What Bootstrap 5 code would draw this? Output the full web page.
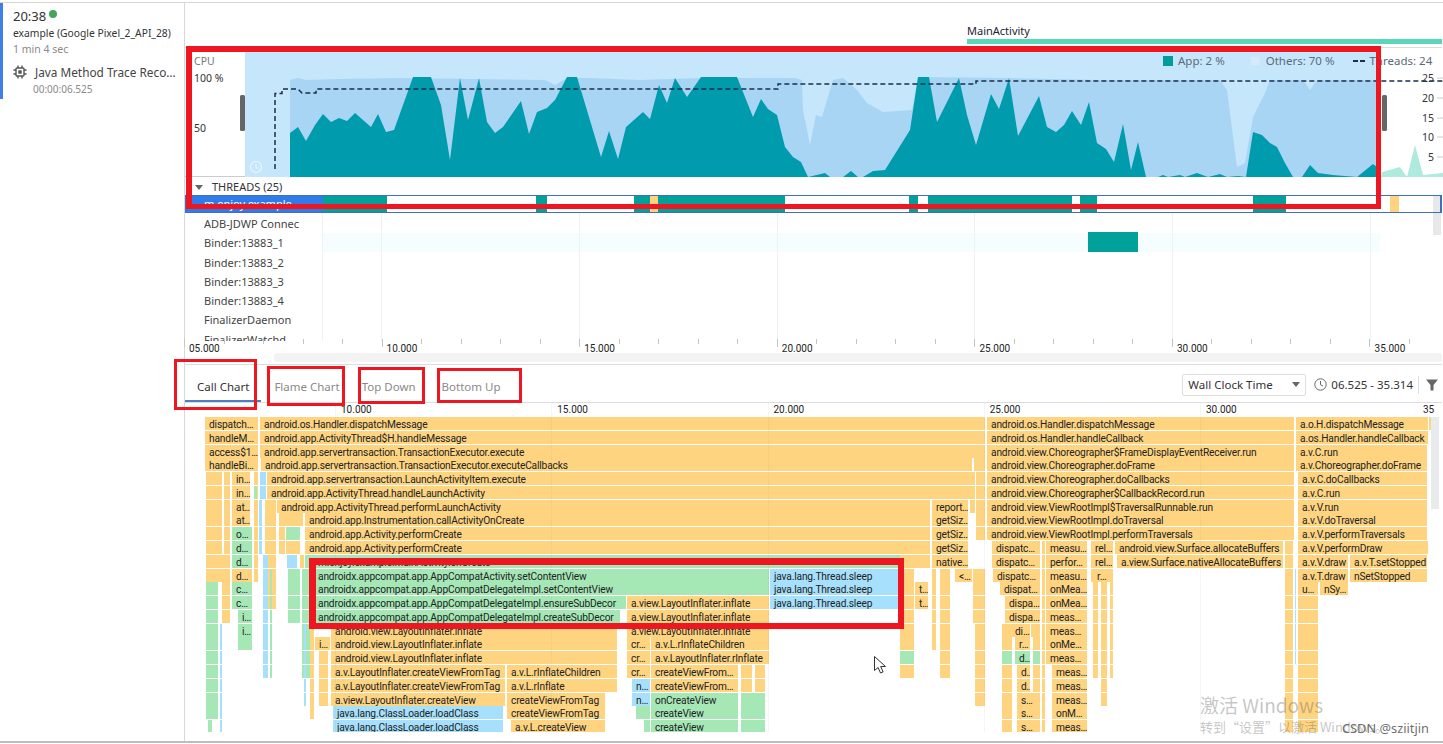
<!DOCTYPE html>
<html lang="en">
<head>
<meta charset="UTF-8">
<title>Profiler</title>
<link href="https://cdn.jsdelivr.net/npm/bootstrap@5.3.0/dist/css/bootstrap.min.css" rel="stylesheet">
<style>
html, body { margin: 0; height: 744px; overflow: hidden; background: #fff; }
body { font-family: "Noto Sans", "Noto Sans CJK SC", sans-serif; font-size: 11px; color: #333; position: relative; }
.app-root { width: 1443px; border-top: 1px solid #d6d6d6; margin-top: 2px; border-bottom: 2px solid #bdbdbd; box-sizing: content-box; height: 738px; border-right: 1px solid #ddd; }
.side-col { width: 185px; flex: none; border-right: 1px solid #d8d8d8; }
.session-box { height: 96px; border-left: 3px solid #3f7fe6; padding: 4px 0 0 10px; }
.clock-time { font-size: 13px; line-height: 18px; color: #333; }
.live-dot { width: 8px; height: 8px; border-radius: 50%; background: #45a65a; margin-left: 3px; margin-bottom: 4px; }
.device-name { font-size: 10.3px; line-height: 15px; margin-top: 1px; color: #333; white-space: nowrap; }
.muted-text { font-size: 10.5px; line-height: 15px; color: #8a8a8a; margin-top: 1px; }
.trace-title { font-size: 11.8px; line-height: 16px; margin-top: 7px; white-space: nowrap; color: #444; }
.trace-time { font-size: 10px; line-height: 14px; margin: 2px 0 0 20px; color: #8a8a8a; }
.main-col { width: 1257px; flex: none; }
.activity-band { height: 44px; padding-left: 782px; }
.activity-name { font-size: 11px; line-height: 14px; padding-top: 21px; color: #223; }
.activity-line { height: 5px; background: #5ad6b8; margin-top: 1px; }
.cpu-band { height: 130px; border-top: 1px solid #ddd; border-bottom: 1px solid #ccc; position: relative; }
.cpu-labels { width: 60px; flex: none; padding: 6px 0 0 9px; font-size: 10.5px; line-height: 14px; }
.cpu-label-head { color: #777; }
.cpu-label-top { margin-top: 3px; }
.cpu-label-mid { margin-top: 36px; }
.cpu-canvas { display: block; overflow: visible; }
.cpu-legend { position: absolute; top: 5px; left: 978px; font-size: 11.5px; line-height: 16px; color: #5b6b78; white-space: nowrap; }
.legend-swatch { width: 10px; height: 10px; margin-right: 5px; }
.swatch-app { background: #009c9c; }
.swatch-others { background: #d3ecfd; border: 1px solid #cfe6f7; }
.legend-app { margin-right: 25px; }
.legend-others { margin-right: 19px; margin-left: 1px; }
.axis-num { position: absolute; left: 1237px; font-size: 10.5px; line-height: 12px; color: #333; }
.axis-25 { top: 24px; }
.axis-20 { top: 44px; }
.axis-15 { top: 64px; }
.axis-10 { top: 83px; }
.axis-5 { top: 103px; left: 1243px; }
.threads-head { height: 18px; padding: 2px 0 0 10px; font-size: 11px; line-height: 16px; color: #333; }
.head-caret { width: 0; height: 0; border-left: 4px solid transparent; border-right: 4px solid transparent; border-top: 5px solid #666; margin-right: 9px; }
.thread-selected { height: 18px; border: 1px solid #3f6fc4; border-right-width: 2px; position: relative; }
.thread-label { width: 137px; height: 100%; background: #2f7bea; color: #fff; padding-left: 18px; line-height: 15px; }
.thread-seg { position: absolute; top: 0; bottom: 0; }
.thread-list { height: 128px; overflow: hidden; position: relative; padding-top: 1px; }
.thread-name { height: 19.3px; line-height: 19.3px; padding-left: 19px; font-size: 11px; color: #444; white-space: nowrap; width: 137px; position: relative; }
.thread-stripe { position: absolute; left: 138px; top: 20px; width: 1057px; height: 19px; background: #f6fdfe; }
.thread-block { position: absolute; left: 903px; top: 19px; width: 50px; height: 20px; background: #00a19a; }
.thread-sep { position: absolute; top: 0; bottom: 0; width: 1px; background: #eef2f4; }
.thread-sep-first { left: 137px; }
.side-thumb { position: absolute; left: 1248px; top: 0; width: 8px; height: 22px; background: #e6e8ea; }
.ruler-band { height: 13px; margin-top: -2px; position: relative; font-family: Roboto, sans-serif; font-size: 10px; color: #222; }
.ruler-tick { position: absolute; top: 0; width: 1px; height: 5px; background: #c4c4c4; }
.ruler-tick-major { height: 8px; }
.ruler-num { position: absolute; top: 3px; line-height: 14px; }
.range-track { height: 9px; margin: 1px 0 2px 89px; background: #f3f3f3; border-radius: 3px; }
.tab-band { height: 39px; border-top: 1px solid #ddd; border-bottom: 1px solid #ddd; }
.tab-btn { padding: 14px 12px 0 12px; height: 37px; font-size: 11.5px; line-height: 16px; color: #8a8a8a; white-space: nowrap; }
.tab-on { color: #333; border-bottom: 2px solid #4a7fc4; }
.tab-flame { margin-left: 1px; }
.tab-top { margin-left: -1px; padding-left: 11px; }
.tab-bottom { margin-left: 2px; }
.tab-tools { height: 37px; padding-top: 2px; }
.clock-select { width: 124px; height: 22px; border: 1px solid #ddd; border-radius: 2px; padding-left: 5px; font-size: 11.5px; line-height: 20px; color: #333; margin-right: 8px; }
.select-caret { width: 0; height: 0; border-left: 4px solid transparent; border-right: 4px solid transparent; border-top: 5px solid #666; margin-right: 5px; }
.range-text { font-size: 11.5px; color: #333; margin: 0 5px 0 4px; white-space: nowrap; }
.tool-sep { width: 1px; height: 18px; background: #ddd; margin-right: 7px; }
.chart-area { height: 337px; position: relative; overflow: hidden; }
.chart-num { position: absolute; top: 0; font-family: Roboto, sans-serif; font-size: 10px; line-height: 14px; color: #222; }
.flame-box { position: absolute; left: 0; top: 0; width: 1257px; height: 329px; overflow: hidden; }
.flame-bar { position: absolute; height: 13px; font-family: Roboto, sans-serif; font-size: 10.2px; letter-spacing: -0.16px; line-height: 15px; color: #222; overflow: hidden; white-space: nowrap; padding-left: 4px; }
.bar-o { background: #fed481; }
.bar-g { background: #a5e8b6; }
.bar-b { background: #a6e0fc; }
.grid-line { position: absolute; top: 0; bottom: 8px; width: 1px; background: rgba(120,120,120,.07); }
.chart-thumb { position: absolute; left: 1246px; top: 14px; width: 8px; height: 92px; background: #e8eaec; }
.red-frame { position: absolute; border-style: solid; border-color: #ee1620; pointer-events: none; }
.frame-cpu { left: 186px; top: 46px; width: 1195px; height: 163px; border-width: 6px 5px 5px 6px; }
.frame-call { left: 174px; top: 359px; width: 83px; height: 51px; border-width: 3px; }
.frame-flame { left: 267px; top: 366px; width: 78px; height: 40px; border-width: 3px; }
.frame-top { left: 358px; top: 367px; width: 67px; height: 37px; border-width: 3px; }
.frame-bottom { left: 437px; top: 368px; width: 85px; height: 35px; border-width: 3px; }
.frame-code { left: 309px; top: 558px; width: 595px; height: 71px; border-width: 7px 6px 6px 7px; }
.watermark { position: absolute; left: 1200px; top: 692px; color: rgba(90,90,90,.36); font-family: "Noto Sans CJK SC", "Noto Sans", sans-serif; white-space: nowrap; }
.wm-big { font-size: 19px; line-height: 26px; }
.wm-small { font-size: 13px; line-height: 18px; }
.csdn-mark { position: absolute; left: 1342px; top: 719px; font-size: 12.8px; line-height: 18px; color: rgba(70,70,70,.8); white-space: nowrap; }
.mouse-arrow { position: absolute; left: 873px; top: 655px; }
</style>
</head>
<body>
<div class="app-root d-flex">
  <div class="side-col">
    <div class="session-box">
      <div class="d-flex align-items-center clock-time">20:38<span class="live-dot"></span></div>
      <div class="device-name">example (Google Pixel_2_API_28)</div>
      <div class="muted-text">1 min 4 sec</div>
      <div class="trace-title d-flex align-items-center">
        <svg width="14" height="14" viewBox="0 0 14 14" class="me-1" fill="none" stroke="#555" stroke-width="1.4"><rect x="3" y="3" width="8" height="8" rx="1"/><rect x="5.3" y="5.3" width="3.4" height="3.4" fill="#555" stroke="none"/><path d="M5 0.5v2.5M9 0.5v2.5M5 11v2.5M9 11v2.5M0.5 5h2.5M0.5 9h2.5M11 5h2.5M11 9h2.5"/></svg>
        <span class="ms-1">Java Method Trace Reco…</span>
      </div>
      <div class="trace-time">00:00:06.525</div>
    </div>
  </div>
  <div class="main-col">
    <div class="activity-band">
      <div class="activity-name">MainActivity</div>
      <div class="activity-line"></div>
    </div>
    <div class="cpu-band d-flex">
      <div class="cpu-labels">
        <div class="cpu-label-head">CPU</div>
        <div class="cpu-label-top">100 %</div>
        <div class="cpu-label-mid">50</div>
      </div>
      <svg class="cpu-canvas" id="cpuChart" width="1198" height="129" viewBox="245 48 1198 129"></svg>
      <div class="cpu-legend d-flex align-items-center">
        <span class="legend-swatch swatch-app"></span><span class="legend-app">App: 2 %</span>
        <span class="legend-swatch swatch-others"></span><span class="legend-others">Others: 70 %</span>
        <svg width="12" height="4" class="me-1"><path d="M0 2h5M7 2h5" stroke="#1a2f4a" stroke-width="2"/></svg><span>Threads: 24</span>
      </div>
      <span class="axis-num axis-25">25</span>
      <span class="axis-num axis-20">20</span>
      <span class="axis-num axis-15">15</span>
      <span class="axis-num axis-10">10</span>
      <span class="axis-num axis-5">5</span>
    </div>
    <div class="threads-head d-flex align-items-center"><span class="head-caret"></span>THREADS (25)</div>
    <div class="thread-selected" id="mainThread">
      <div class="thread-label">m.enjoy.example</div>
    </div>
    <div class="thread-list" id="threadList">
      <div class="thread-stripe"></div>
      <div class="thread-sep thread-sep-first"></div>
      <div class="thread-block"></div>
      <div class="thread-name">ADB-JDWP Connec</div>
      <div class="thread-name">Binder:13883_1</div>
      <div class="thread-name">Binder:13883_2</div>
      <div class="thread-name">Binder:13883_3</div>
      <div class="thread-name">Binder:13883_4</div>
      <div class="thread-name">FinalizerDaemon</div>
      <div class="thread-name">FinalizerWatchd</div>
      <div class="side-thumb"></div>
    </div>
    <div class="ruler-band" id="timeRuler"></div>
    <div class="range-track"></div>
    <div class="tab-band d-flex align-items-start">
      <div class="tab-btn tab-on">Call Chart</div>
      <div class="tab-btn tab-flame">Flame Chart</div>
      <div class="tab-btn tab-top">Top Down</div>
      <div class="tab-btn tab-bottom">Bottom Up</div>
      <div class="d-flex align-items-center ms-auto tab-tools">
        <div class="clock-select d-flex align-items-center justify-content-between">Wall Clock Time<span class="select-caret"></span></div>
        <svg width="13" height="13" viewBox="0 0 13 13" fill="none" stroke="#666"><circle cx="6.5" cy="6.5" r="5.7"/><path d="M6.5 3v3.7l2.5 1.4"/></svg>
        <span class="range-text">06.525 - 35.314</span>
        <span class="tool-sep"></span>
        <svg width="12" height="12" viewBox="0 0 12 12" class="me-1"><path d="M0 0.5h12L7.5 6v5.5h-3V6z" fill="#666"/></svg>
      </div>
    </div>
    <div class="chart-area" id="chartArea">
      <div class="flame-box" id="flameBox"></div>
      <div class="chart-thumb"></div>
    </div>
  </div>
</div>

<div class="red-frame frame-cpu"></div>
<div class="red-frame frame-call"></div>
<div class="red-frame frame-flame"></div>
<div class="red-frame frame-top"></div>
<div class="red-frame frame-bottom"></div>
<div class="red-frame frame-code"></div>

<svg class="mouse-arrow" width="16" height="20" viewBox="0 0 16 20"><path d="M1.5 1.5v14l3.6-3 2.4 5.5 2.6-1.1-2.4-5.4h4.8z" fill="#fff" stroke="#333" stroke-width="1"/></svg>

<div class="watermark">
  <div class="wm-big">激活 Windows</div>
  <div class="wm-small">转到“设置”以激活 Windows。</div>
</div>
<div class="csdn-mark">CSDN @sziitjin</div>

<script>
// cpu chart, all coordinates are page pixels (viewBox handles the offset)
const app = [[290,177],[290,133],[298,127],[306,141],[315,125],[323,114],[331,122],[339,118],[347,121],[355,113],[363,120],[371,127],[378,114],[386,132],[394,130],[403,105],[413,77],[431,77],[441,105],[450,160],[460,78],[468,120],[479,78],[487,122],[495,133],[503,127],[521,101],[529,134],[537,112],[547,108],[555,100],[567,77],[577,77],[601,157],[609,131],[618,159],[626,127],[643,112],[650,119],[659,85],[667,103],[675,78],[687,97],[701,77],[737,77],[753,117],[761,99],[768,109],[777,115],[785,147],[793,157],[801,162],[808,177],[825,173],[830,177],[843,177],[851,171],[858,177],[863,177],[873,171],[885,170],[910,130],[918,77],[929,77],[937,122],[959,78],[967,115],[976,145],[991,94],[999,109],[1009,78],[1018,136],[1039,96],[1047,127],[1056,132],[1064,125],[1072,111],[1081,125],[1089,102],[1097,143],[1106,149],[1114,162],[1123,124],[1131,170],[1138,142],[1146,177],[1158,177],[1163,175],[1168,177],[1180,175],[1185,177],[1197,173],[1208,177],[1220,174],[1227,177],[1238,176],[1246,177],[1253,132],[1262,135],[1270,143],[1277,147],[1285,163],[1293,177],[1302,177],[1310,165],[1318,173],[1333,175],[1357,177],[1373,164],[1381,170],[1381,177]];
const others = [[290,177],[290,80],[298,78],[306,80],[340,79],[400,78],[545,80],[555,85],[567,78],[590,78],[640,80],[700,78],[795,78],[802,80],[803,110],[810,145],[816,115],[822,117],[833,80],[843,78],[857,90],[867,103],[883,112],[912,110],[918,77],[1009,78],[1100,80],[1220,80],[1227,90],[1230,113],[1237,167],[1245,163],[1253,117],[1265,93],[1270,80],[1303,80],[1310,90],[1317,80],[1381,80],[1381,177]];
const pale = [[1381,177],[1382,172],[1400,167],[1407,177],[1415,145],[1423,175],[1443,173],[1443,177]];
const pts = a => a.map(p => p.join(',')).join(' ');
document.getElementById('cpuChart').innerHTML =
  '<rect x="245" y="48" width="1136" height="129" fill="#c6e6fc"/>' +
  `<polygon points="${pts(others)}" fill="#a9d5f5"/>` +
  `<polygon points="${pts(app)}" fill="#009cad"/>` +
  `<polygon points="${pts(pale)}" fill="#aeeade"/>` +
  '<path d="M275 169V93.5H282V89H298L302 93H316V89H778V84H976V81H1443" fill="none" stroke="#1a2f4a" stroke-width="1.5" stroke-dasharray="5 3"/>' +
  '<rect x="240" y="95" width="5" height="36" rx="1.5" fill="#666"/><rect x="1382" y="95" width="5" height="36" rx="1.5" fill="#666"/>' +
  '<g fill="none" stroke="#eaf6fe" stroke-width="1.2"><circle cx="256" cy="167" r="5.5"/><path d="M256 164v3.2l2 1.2"/></g>' +
  [78,98,118,137,157].map(y => `<path d="M1437 ${y}h6" stroke="#ccc"/>`).join('');

// main thread states
const segs = [[323,387,'#00a19a'],[536,547,'#00a19a'],[634,650,'#00a19a'],[650,658,'#ffd27f'],[658,785,'#00a19a'],[909,918,'#00a19a'],[928,1072,'#00a19a'],[1080,1097,'#00a19a'],[1253,1286,'#00a19a'],[1390,1399,'#ffd27f'],[1433,1440,'#e6e8ea']];
const mt = document.getElementById('mainThread');
segs.forEach(s => {
  const d = document.createElement('div');
  d.className = 'thread-seg';
  d.style.left = (s[0] - 186) + 'px';
  d.style.width = (s[1] - s[0]) + 'px';
  d.style.background = s[2];
  mt.appendChild(d);
});

// thread list grid lines
const tl = document.getElementById('threadList');
[381,579,777,974,1172,1370].forEach(x => {
  const d = document.createElement('div');
  d.className = 'thread-sep';
  d.style.left = (x - 185) + 'px';
  tl.appendChild(d);
});

// time ruler
const ruler = document.getElementById('timeRuler');
for (let i = 0; i < 33; i++) {
  const x = 184 + i * 39.5 - 185;
  const d = document.createElement('div');
  d.className = 'ruler-tick' + (i % 5 == 0 ? ' ruler-tick-major' : '');
  d.style.left = x + 'px';
  ruler.appendChild(d);
}
['05.000','10.000','15.000','20.000','25.000','30.000','35.000'].forEach((t, i) => {
  const d = document.createElement('div');
  d.className = 'ruler-num';
  d.style.left = (4 + i * 197.6) + 'px';
  d.textContent = t;
  ruler.appendChild(d);
});

// call chart
const area = document.getElementById('chartArea');
const box = document.getElementById('flameBox');
const chartTop = 404;
function bar(r, x0, x1, c, t, pad) {
  const d = document.createElement('div');
  d.className = 'flame-bar bar-' + c;
  d.style.top = Math.round(418 + 13.78 * r - chartTop) + 'px';
  d.style.left = (x0 - 185) + 'px';
  d.style.width = (x1 - x0) + 'px';
  if (pad !== undefined) d.style.paddingLeft = pad + 'px';
  if (!t) d.style.padding = 0;
  if (t) d.textContent = t;
  box.appendChild(d);
}
function col(r0, r1, x0, x1, c) { for (let r = r0; r <= r1; r++) bar(r, x0, x1, c); }

// thin columns of short calls, they only need their colour
[
 [4,11,206,222,'o'],[4,9,224,230,'o'],[12,21,206,218,'g'],[22,22,208,212,'g'],[10,14,222,230,'o'],
 [15,22,220,222,'b'],[4,11,254,258,'o'],[4,5,260,266,'b'],[5,5,254,257,'g'],[6,9,259,262,'b'],[6,13,265,276,'o'],
 [10,18,263,268,'b'],[11,18,270,272,'g'],[7,7,279,303,'o'],[8,9,279,285,'o'],[9,9,286,300,'o'],[10,10,300,304,'o'],
 [11,18,302,312,'g'],[11,14,288,300,'g'],[15,20,304,306,'b'],[15,21,310,314,'o'],[17,20,319,328,'o'],
 [18,19,741,752,'o'],[18,19,755,765,'o'],[20,22,741,765,'g'],
 [11,18,900,914,'o'],[11,16,932,936,'o'],[11,18,940,950,'o'],[11,14,973,985,'o'],[15,20,975,985,'o'],
 [9,22,1042,1045,'o'],[12,15,1031,1040,'o'],[15,22,1002,1012,'o'],[16,22,1033,1040,'o'],
 [12,18,1093,1098,'o'],[12,20,1101,1107,'o'],[12,18,1110,1113,'o'],[9,22,1285,1293,'o'],[13,22,1298,1318,'o'],[11,17,1295,1296,'b'],
 [6,8,976,985,'o'],[4,5,976,985,'o']
].forEach(c => col(...c));
bar(17,900,914,'g');
bar(17,1002,1012,'g');
bar(17,1033,1040,'g');

// long bars, drawn after the columns so their text stays on top
[
 [0,205,258,'o','dispatch…'],[0,260,985,'o','android.os.Handler.dispatchMessage'],[0,987,1294,'o','android.os.Handler.dispatchMessage'],[0,1296,1428,'o','a.o.H.dispatchMessage'],[0,1429,1432,'o'],
 [1,205,258,'o','handleM…'],[1,260,985,'o','android.app.ActivityThread$H.handleMessage'],[1,987,1294,'o','android.os.Handler.handleCallback'],[1,1296,1428,'o','a.os.Handler.handleCallback'],
 [2,205,258,'o','access$1…'],[2,260,985,'o','android.app.servertransaction.TransactionExecutor.execute'],[2,987,1294,'o','android.view.Choreographer$FrameDisplayEventReceiver.run'],[2,1296,1427,'o','a.v.C.run'],
 [3,205,258,'o','handleBi…'],[3,261,972,'o','android.app.servertransaction.TransactionExecutor.executeCallbacks'],[3,974,985,'o'],[3,987,1294,'o','android.view.Choreographer.doFrame'],[3,1296,1427,'o','a.v.Choreographer.doFrame'],
 [4,232,250,'o','in…'],[4,267,975,'o','android.app.servertransaction.LaunchActivityItem.execute'],[4,987,1294,'o','android.view.Choreographer.doCallbacks'],[4,1298,1427,'o','a.v.C.doCallbacks'],
 [5,232,250,'o','in…'],[5,267,975,'o','android.app.ActivityThread.handleLaunchActivity'],[5,987,1294,'o','android.view.Choreographer$CallbackRecord.run'],[5,1298,1427,'o','a.v.C.run'],
 [6,232,250,'o','at…'],[6,277,930,'o','android.app.ActivityThread.performLaunchActivity'],[6,932,968,'o','report…'],[6,970,975,'o'],[6,987,1294,'o','android.view.ViewRootImpl$TraversalRunnable.run'],[6,1298,1427,'o','a.v.V.run'],
 [7,232,250,'o','at…'],[7,305,930,'o','android.app.Instrumentation.callActivityOnCreate'],[7,932,968,'o','getSiz…'],[7,987,1294,'o','android.view.ViewRootImpl.doTraversal'],[7,1298,1427,'o','a.v.V.doTraversal'],
 [8,232,252,'g','o…'],[8,286,300,'g'],[8,305,930,'o','android.app.Activity.performCreate'],[8,932,968,'o','getSiz…'],[8,987,1294,'o','android.view.ViewRootImpl.performTraversals'],[8,1298,1427,'o','a.v.V.performTraversals'],
 [9,232,252,'g','d…'],[9,305,930,'o','android.app.Activity.performCreate'],[9,932,968,'o','getSiz…'],[9,992,1040,'o','dispatc…'],[9,1046,1087,'o','measu…'],[9,1091,1113,'o','rel…'],[9,1115,1283,'o','android.view.Surface.allocateBuffers'],[9,1298,1428,'o','a.v.V.performDraw'],
 [10,232,252,'g','d…'],[10,287,297,'b'],[10,305,900,'g','m.enjoy.example.MainActivity.onCreate',13],[10,900,930,'o'],[10,932,968,'o','native…'],[10,992,1040,'o','dispatc…'],[10,1046,1087,'o','perfor…'],[10,1091,1113,'o','rel…'],[10,1117,1283,'o','a.view.Surface.nativeAllocateBuffers'],[10,1298,1348,'o','a.v.V.draw'],[10,1350,1427,'o','a.v.T.setStopped'],
 [11,232,252,'o','d…'],[11,314,769,'g','androidx.appcompat.app.AppCompatActivity.setContentView'],[11,770,899,'b','java.lang.Thread.sleep'],[11,955,972,'o','<…'],[11,993,1040,'o','dispatc…'],[11,1046,1087,'o','measu…'],[11,1091,1113,'o','r…',6],[11,1298,1348,'o','a.v.T.draw'],[11,1350,1427,'o','nSetStopped'],
 [12,232,252,'g','c…'],[12,314,769,'g','androidx.appcompat.app.AppCompatDelegateImpl.setContentView'],[12,770,899,'b','java.lang.Thread.sleep'],[12,915,928,'o','t…'],[12,1000,1040,'o','dispat…'],[12,1046,1087,'o','onMea…'],[12,1298,1318,'o','u…'],[12,1320,1348,'o','nSy…'],
 [13,232,252,'g','c…'],[13,314,626,'g','androidx.appcompat.app.AppCompatDelegateImpl.ensureSubDecor'],[13,627,769,'o','a.view.LayoutInflater.inflate'],[13,770,899,'b','java.lang.Thread.sleep'],[13,915,928,'o','t…'],[13,1005,1040,'o','dispa…'],[13,1046,1087,'o','onMea…'],
 [14,238,252,'g','i…'],[14,314,620,'g','androidx.appcompat.app.AppCompatDelegateImpl.createSubDecor'],[14,627,769,'o','a.view.LayoutInflater.inflate'],[14,1005,1040,'o','dispa…'],[14,1046,1087,'o','meas…'],
 [15,238,252,'g','i…'],[15,331,617,'o','android.view.LayoutInflater.inflate'],[15,627,769,'o','a.view.LayoutInflater.inflate'],[15,1012,1030,'o','di…',3],[15,1046,1087,'o','meas…'],
 [16,238,252,'g'],[16,315,330,'o','i…'],[16,331,617,'o','android.view.LayoutInflater.inflate'],[16,627,650,'o','cr…'],[16,651,769,'o','a.v.L.rInflateChildren'],[16,1015,1030,'o','r…'],[16,1046,1087,'o','onMe…'],
 [17,331,617,'o','android.view.LayoutInflater.inflate'],[17,627,650,'o','cr…'],[17,651,769,'o','a.v.LayoutInflater.rInflate'],[17,1015,1030,'g','d…'],[17,1046,1087,'o','meas…'],
 [18,331,505,'o','a.v.LayoutInflater.createViewFromTag'],[18,507,617,'o','a.v.L.rInflateChildren'],[18,627,650,'o','cr…'],[18,651,738,'o','createViewFrom…'],[18,1017,1030,'o','d…'],[18,1052,1087,'o','meas…'],
 [19,331,505,'o','a.v.LayoutInflater.createViewFromTag'],[19,507,617,'o','a.v.L.rInflate'],[19,632,650,'b','n…'],[19,651,738,'o','createViewFrom…'],[19,1017,1030,'o','d…'],[19,1052,1087,'o','meas…'],
 [20,331,505,'o','a.view.LayoutInflater.createView'],[20,507,605,'o','createViewFromTag'],[20,632,650,'b','n…'],[20,651,738,'g','onCreateView'],[20,1017,1033,'o','s…'],[20,1052,1087,'o','meas…'],
 [21,333,503,'b','java.lang.ClassLoader.loadClass'],[21,507,605,'o','createViewFromTag'],[21,636,650,'g'],[21,651,738,'g','createView'],[21,1017,1033,'o','s…'],[21,1052,1087,'o','onM…'],
 [22,333,503,'b','java.lang.ClassLoader.loadClass'],[22,511,605,'o','a.v.L.createView'],[22,644,650,'g'],[22,651,738,'g','createView'],[22,1017,1033,'o','s…'],[22,1052,1087,'o','meas…']
].forEach(b => bar(...b));

// ruler + grid on top of the bars
['10.000','15.000','20.000','25.000','30.000'].forEach((t, i) => {
  const x = 335 + i * 216.25;
  const n = document.createElement('div');
  n.className = 'chart-num';
  n.style.left = (x - 185 + 6) + 'px';
  n.textContent = t;
  area.appendChild(n);
  const g = document.createElement('div');
  g.className = 'grid-line';
  g.style.left = (x - 185) + 'px';
  area.appendChild(g);
});
const last = document.createElement('div');
last.className = 'chart-num';
last.style.left = '1238px';
last.textContent = '35';
area.appendChild(last);
</script>
<script src="https://cdn.jsdelivr.net/npm/bootstrap@5.3.0/dist/js/bootstrap.bundle.min.js"></script>
</body>
</html>
